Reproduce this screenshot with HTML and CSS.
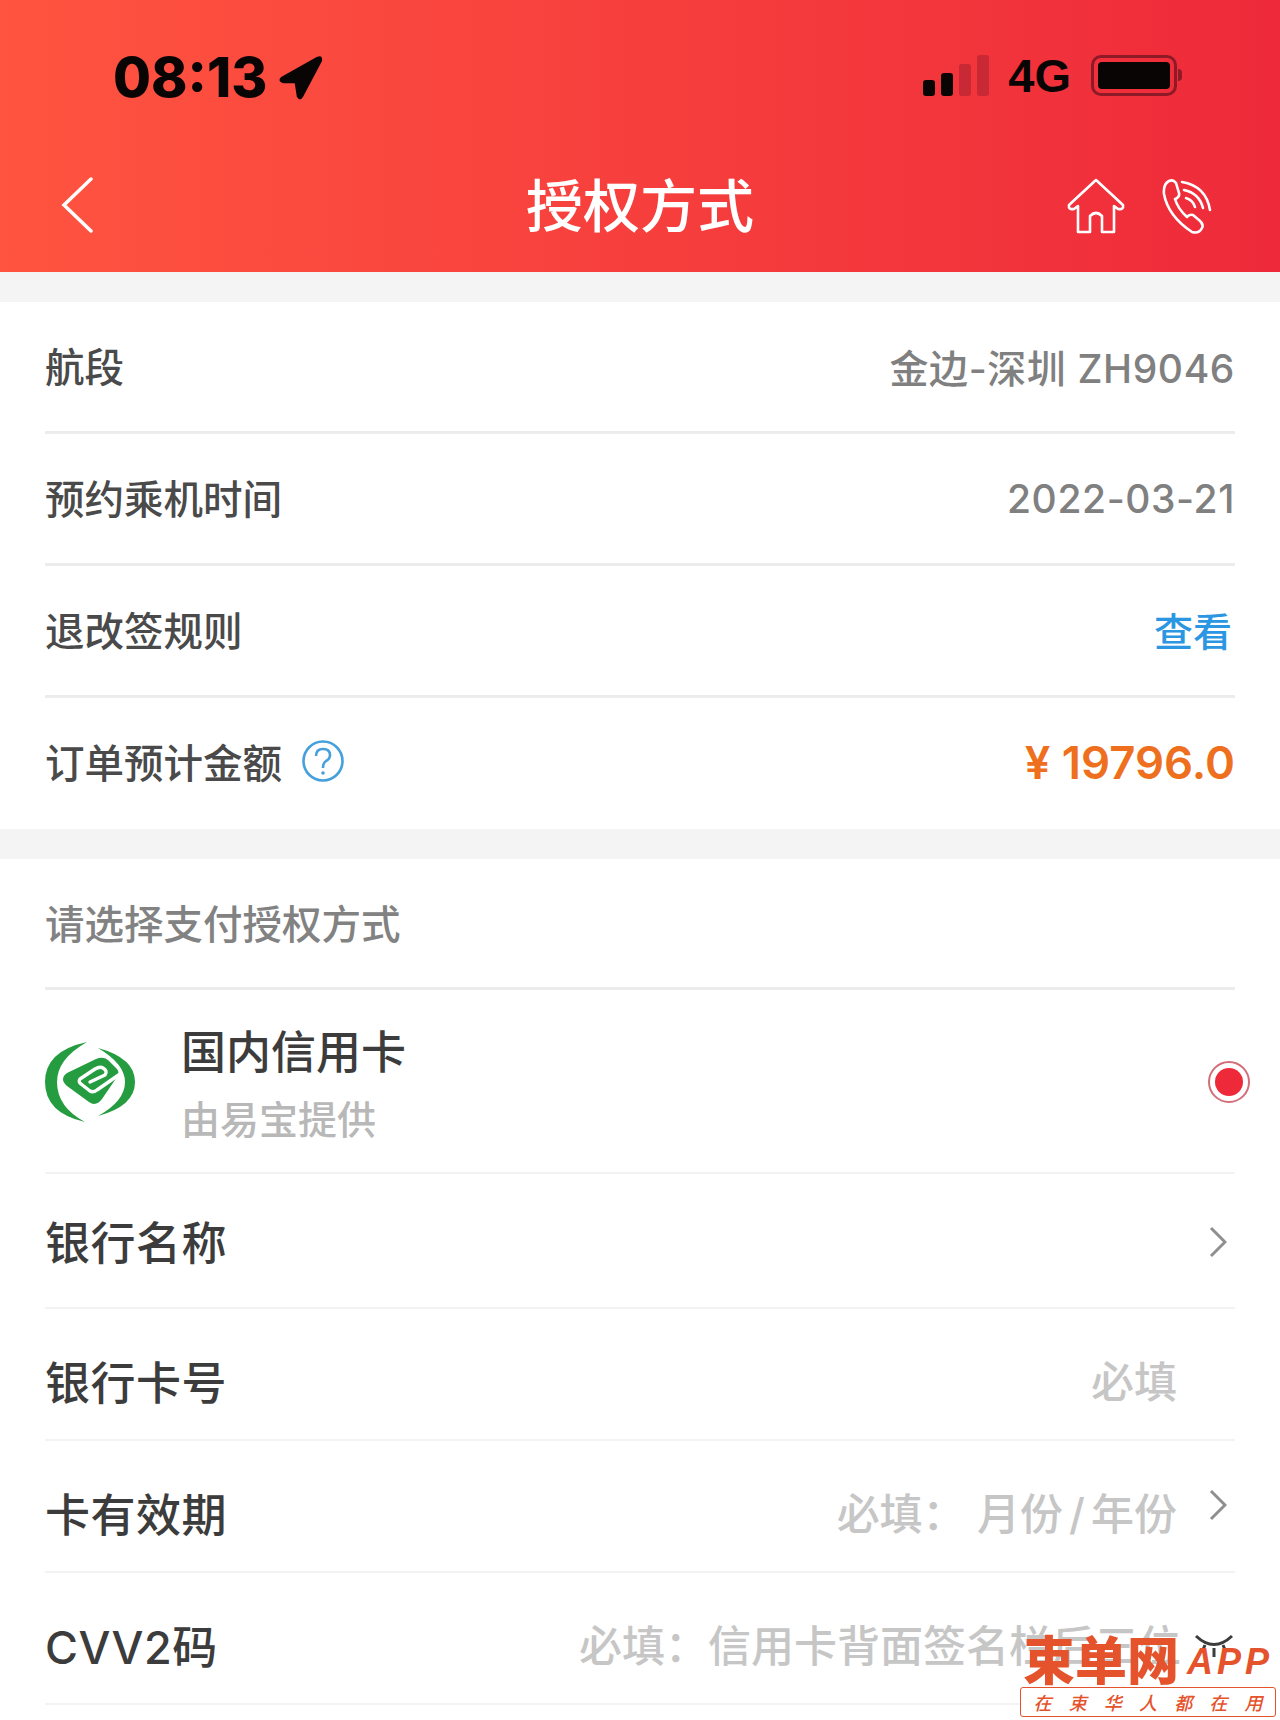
FILE: index.html
```html
<!DOCTYPE html>
<html lang="zh-CN">

<head>
    <meta charset="UTF-8">
    <title>授权方式</title>
    <link rel="stylesheet" href="styles.css">
</head>

<body>
    <div class="top">
        <div class="status">
            <div class="status-left">
                <span class="time">08:13</span>
                <svg class="arrow" viewBox="0 0 44 44"><path d="M3 21 L37 2 Q43 -1 42 6 L24 40 Q21 45 18 40 L16 27 L5 27 Q-1 25 3 21Z" /></svg>
            </div>
            <div class="status-right">
                <div class="signal"><i class="s1"></i><i class="s2"></i><i class="s3"></i><i class="s4"></i></div>
                <span class="net">4G</span>
                <div class="battery"><i></i></div>
                <span class="battery-tip"></span>
            </div>
        </div>
        <div class="nav">
            <svg class="back" viewBox="0 0 32 56"><path d="M30 2 L3 28 L30 54" /></svg>
            <h1>授权方式</h1>
            <div class="nav-icons">
                <svg class="home" viewBox="0 0 60 56"><path d="M30 2 L57 27 Q58 32 52 31 L48 28 V54 H36 V38 Q30 32 24 38 V54 H12 V28 L8 31 Q2 32 3 27Z" /></svg>
                <svg class="phone" viewBox="0 0 50 56">
                    <path d="M7 3 Q1 6 2 16 Q6 38 30 54 Q37 56 40 50 Q42 46 37 42 L31 37 Q27 36 25 39 Q16 31 13 21 Q18 19 17 15 L14 5 Q11 1 7 3Z" />
                    <path d="M20 4 Q44 8 48 32" />
                    <path d="M22 12 Q37 15 41 30" />
                    <path d="M24 20 Q31 22 33 29" />
                </svg>
            </div>
        </div>
    </div>

    <div class="gap"></div>

    <div class="list">
        <div class="row">
            <span class="name">航段</span>
            <span class="val">金边-深圳 ZH9046</span>
        </div>
        <div class="row">
            <span class="name">预约乘机时间</span>
            <span class="val">2022-03-21</span>
        </div>
        <div class="row">
            <span class="name">退改签规则</span>
            <span class="link">查看</span>
        </div>
        <div class="row last">
            <span class="name">订单预计金额
                <svg class="help" viewBox="0 0 42 42">
                    <circle cx="21" cy="21" r="19.5" />
                    <path d="M14 16 Q14 9 21 9 Q28 9 28 15 Q28 19 24 21 Q21 23 21 28" />
                    <circle class="dot" cx="21" cy="33" r="1.8" />
                </svg>
            </span>
            <span class="price">¥ 19796.0</span>
        </div>
    </div>

    <div class="gap"></div>

    <div class="list">
        <div class="row pick-title">请选择支付授权方式</div>
        <div class="row card-row">
            <svg class="logo" viewBox="0 0 92 84">
                <path d="M42 1 Q0 10 0 41 Q0 72 40 81 Q12 66 12 41 Q12 18 42 1Z" />
                <path d="M53 7 Q90 17 90 41 Q90 65 53 75 Q80 60 80 41 Q80 23 53 7Z" />
                <path d="M22 32 L51 18 Q58 15 63 19 L72 28 Q75 32 72 36 L57 58 Q51 66 44 61 L22 45 Q14 38 22 32Z" />
                <path class="e" d="M45 41 L60 34 Q63 30 58 27 Q55 25 50 28 L35 38 Q33 41 36 43 L45 50 Q48 52 52 49 L75 33" />
            </svg>
            <div class="card-text">
                <div class="card-name">国内信用卡</div>
                <div class="card-sub">由易宝提供</div>
            </div>
            <span class="radio"><i></i></span>
        </div>
        <div class="row form-row bank-row">
            <span class="label">银行名称</span>
            <svg class="chev" viewBox="0 0 18 32"><path d="M2 2 L16 16 L2 30" /></svg>
        </div>
        <div class="row form-row low">
            <span class="label">银行卡号</span>
            <span class="hint">必填</span>
        </div>
        <div class="row form-row low">
            <span class="label">卡有效期</span>
            <span class="hint">必填：&nbsp;月份<span class="slash">/</span>年份</span>
            <svg class="chev up" viewBox="0 0 18 32"><path d="M2 2 L16 16 L2 30" /></svg>
        </div>
        <div class="row form-row low">
            <span class="label">CVV2码</span>
            <span class="hint">必填：信用卡背面签名栏后三位</span>
            <svg class="eye" viewBox="0 0 42 26"><path d="M3 3 Q21 20 39 3 M12 12 L9 19 M21 15 V24 M30 12 L33 19" /></svg>
        </div>
    </div>

    <div class="mark">
        <div class="mark-top"><span class="mark-cn">束单网</span><span class="mark-en">APP</span></div>
        <div class="mark-sub"><span>在</span><span>束</span><span>华</span><span>人</span><span>都</span><span>在</span><span>用</span></div>
    </div>
</body>

</html>
```

FILE: styles.css
```css
html,
body {
    margin: 0;
    padding: 0;
}

body {
    width: 1280px;
    height: 1720px;
    overflow: hidden;
    position: relative;
    background-color: #fff;
    font-family: Inter, "Noto Sans CJK SC", sans-serif;
}

svg {
    display: block;
    flex: none;
}

.top {
    height: 272px;
    background: linear-gradient(90deg, #ff5440 0%, #ee2a3a 100%);
}

.status {
    height: 150px;
    display: flex;
    justify-content: space-between;
    padding: 48px 98px 0 113px;
    box-sizing: border-box;
}

.status-left,
.status-right {
    display: flex;
    align-items: center;
    height: 58px;
}

.status-right {
    margin-top: -2px;
}

.time {
    font-size: 55px;
    font-weight: 800;
    color: #0a0505;
}

.arrow {
    width: 46px;
    height: 46px;
    margin: 2px 0 0 11px;
    fill: #0a0505;
}

.signal {
    display: flex;
    align-items: flex-end;
    gap: 6px;
    height: 42px;
    margin-right: 19px;
}

.signal i {
    width: 12px;
    display: block;
    border-radius: 3px;
    background-color: #0a0505;
}

.signal .s1 {
    height: 16px;
}

.signal .s2 {
    height: 23px;
}

.signal .s3 {
    height: 32px;
    background-color: #c92835;
}

.signal .s4 {
    height: 41px;
    background-color: #c92835;
}

.net {
    font-family: "Liberation Sans", sans-serif;
    font-size: 47px;
    font-weight: 700;
    color: #0a0505;
    margin-right: 20px;
}

.battery {
    width: 86px;
    height: 41px;
    box-sizing: border-box;
    border: 3px solid #8e1a28;
    border-radius: 10px;
    padding: 4px;
}

.battery i {
    display: block;
    height: 100%;
    background-color: #0a0505;
    border-radius: 4px;
}

.battery-tip {
    width: 4px;
    height: 12px;
    margin-left: 1px;
    background-color: #8e1a28;
    border-radius: 0 6px 6px 0;
}

.nav {
    height: 122px;
    display: grid;
    grid-template-columns: 1fr auto 1fr;
    align-items: center;
    padding: 0 61px;
    box-sizing: border-box;
}

.back {
    width: 32px;
    height: 56px;
    margin-top: -12px;
    fill: none;
    stroke: #fff;
    stroke-width: 3.5;
    stroke-linecap: round;
}

.nav h1 {
    margin: -18px 0 0 0;
    font-size: 57px;
    font-weight: 500;
    color: #fff;
    white-space: nowrap;
}

.nav-icons {
    display: flex;
    align-items: center;
    justify-self: end;
    gap: 36px;
    margin: -10px 7px 0 0;
}

.home,
.phone {
    fill: none;
    stroke: #fff;
    stroke-width: 2.6;
    stroke-linejoin: round;
    stroke-linecap: round;
    height: 56px;
}

.home {
    width: 60px;
}

.phone {
    width: 50px;
}

.gap {
    height: 30px;
    background-color: #f4f4f4;
}

.row {
    margin-left: 45px;
    width: 1190px;
    height: 132px;
    padding-bottom: 4px;
    display: flex;
    align-items: center;
    justify-content: space-between;
    box-sizing: border-box;
    border-bottom: 3px solid #ececec;
}

.row.last {
    border-bottom: 0;
    height: 131px;
    padding-bottom: 7px;
}

.name {
    font-size: 39.5px;
    color: #4a4a4a;
    font-weight: 500;
    display: flex;
    align-items: center;
    gap: 20px;
}

.val {
    font-size: 39px;
    font-weight: 500;
    letter-spacing: 0.6px;
    color: #808080;
    margin-top: 3px;
}

.link {
    font-size: 39px;
    color: #2b96e2;
    font-weight: 500;
    margin-right: 3px;
}

.price {
    font-size: 45.5px;
    font-weight: 600;
    color: #ee6f1e;
    margin-top: 4px;
}

.help {
    width: 42px;
    height: 42px;
    margin-top: 2px;
    fill: none;
    stroke: #45a0dc;
    stroke-width: 2.6;
}

.help .dot {
    fill: #45a0dc;
    stroke: none;
}

.pick-title {
    justify-content: flex-start;
    font-size: 39.5px;
    font-weight: 500;
    color: #828282;
    height: 131px;
}

.card-row {
    height: 184px;
    justify-content: flex-start;
    padding-bottom: 0;
    border-bottom-width: 2px;
    border-bottom-color: #f3f3f3;
    position: relative;
}

.logo {
    width: 92px;
    height: 84px;
    margin-top: 3px;
    fill: #259c3f;
    margin-right: 44px;
}

.logo .e {
    fill: none;
    stroke: #fff;
    stroke-width: 3.4;
    stroke-linecap: round;
    stroke-linejoin: round;
}

.card-text {
    padding-top: 9px;
}

.card-name {
    font-size: 45px;
    font-weight: 500;
    color: #3c3c3c;
    line-height: 54px;
    margin-bottom: 15px;
}

.card-sub {
    font-size: 39px;
    font-weight: 500;
    color: #b8b8b8;
    line-height: 50px;
}

.radio {
    position: absolute;
    right: -15px;
    top: 71px;
    width: 42px;
    height: 42px;
    box-sizing: border-box;
    border: 2px solid #d36e78;
    border-radius: 50%;
    display: flex;
    align-items: center;
    justify-content: center;
}

.radio i {
    width: 28px;
    height: 28px;
    border-radius: 50%;
    background-color: #ee2a3a;
}

.form-row {
    padding-bottom: 0;
    border-bottom-width: 2px;
    border-bottom-color: #f3f3f3;
    justify-content: flex-start;
}

.bank-row {
    height: 135px;
}

.bank-row .chev {
    margin-top: 2px;
}

.low {
    padding-top: 13px;
}

.label {
    font-size: 45px;
    font-weight: 500;
    letter-spacing: 0.5px;
    color: #3c3c3c;
    margin-right: auto;
}

.hint {
    font-size: 43px;
    font-weight: 500;
    color: #c6c6c6;
    margin: -3px 58px 0 0;
    white-space: nowrap;
}

.slash {
    margin: 0 6px;
}

.chev {
    width: 18px;
    height: 32px;
    margin-right: 8px;
    fill: none;
    stroke: #8f8f8f;
    stroke-width: 3;
}

.chev.up {
    margin-left: -26px;
    margin-top: -15px;
}

.eye {
    width: 42px;
    height: 26px;
    margin-left: -46px;
    margin-top: 3px;
    fill: none;
    stroke: #3c3c3c;
    stroke-width: 3;
}

.mark {
    position: absolute;
    left: 1020px;
    top: 1637px;
    width: 256px;
    color: #e5532d;
}

.mark-top {
    display: flex;
    align-items: center;
    justify-content: space-between;
    height: 50px;
    padding-right: 3px;
}

.mark-cn {
    font-size: 52px;
    font-weight: 900;
    line-height: 50px;
    margin-left: 3px;
}

.mark-en {
    font-family: "Liberation Sans", sans-serif;
    font-size: 36px;
    font-weight: 700;
    font-style: italic;
    letter-spacing: 4px;
}

.mark-sub {
    height: 30px;
    box-sizing: border-box;
    border: 1px solid #e5532d;
    border-radius: 3px;
    background-color: #fff;
    display: flex;
    align-items: center;
    justify-content: space-around;
    font-size: 18px;
    font-weight: 500;
    font-style: italic;
    padding: 0 4px;
}
```
